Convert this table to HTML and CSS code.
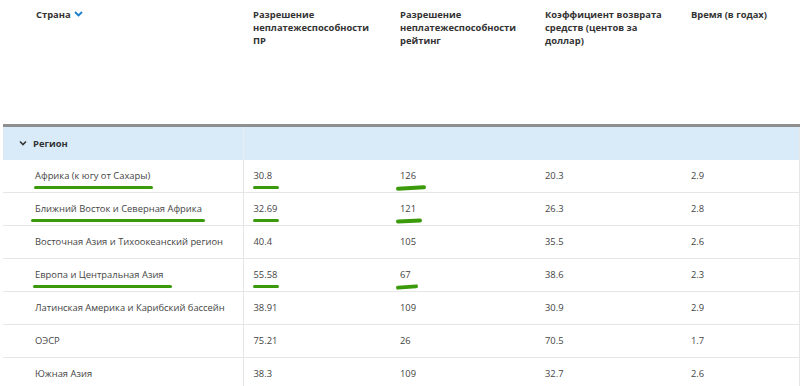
FILE: index.html
```html
<!DOCTYPE html>
<html lang="ru">
<head>
<meta charset="utf-8">
<link rel="stylesheet" href="styles.css">
</head>
<body>
<table class="grid">
  <colgroup>
    <col class="c1"><col class="c2"><col class="c3"><col class="c4"><col class="c5">
  </colgroup>
  <thead>
    <tr>
      <th class="first">Страна <svg class="sort" width="9" height="6" viewBox="0 0 9 6"><path d="M1 1l3.5 3.5L8 1" fill="none" stroke="#1b7fcc" stroke-width="1.8"/></svg></th>
      <th>Разрешение неплатежеспособности ПР</th>
      <th>Разрешение неплатежеспособности рейтинг</th>
      <th>Коэффициент возврата средств (центов за доллар)</th>
      <th>Время (в годах)</th>
    </tr>
  </thead>
  <tbody>
    <tr class="group">
      <td class="gname"><svg class="chev" width="8" height="6" viewBox="0 0 8 6"><path d="M1 1.5l3 3 3-3" fill="none" stroke="#333" stroke-width="1.6"/></svg>Регион</td>
      <td class="rest" colspan="4"></td>
    </tr>
    <tr>
      <td class="first"><span class="mk mk-a">Африка (к югу от Сахары)</span></td>
      <td class="split"><span class="mk mk-n">30.8</span></td>
      <td><span class="mk mk-r">126</span></td>
      <td>20.3</td>
      <td class="last">2.9</td>
    </tr>
    <tr>
      <td class="first"><span class="mk mk-b">Ближний Восток и Северная Африка</span></td>
      <td class="split"><span class="mk mk-n">32.69</span></td>
      <td><span class="mk mk-r mk-r2">121</span></td>
      <td>26.3</td>
      <td class="last">2.8</td>
    </tr>
    <tr>
      <td class="first">Восточная Азия и Тихоокеанский регион</td>
      <td class="split">40.4</td>
      <td>105</td>
      <td>35.5</td>
      <td class="last">2.6</td>
    </tr>
    <tr>
      <td class="first"><span class="mk mk-e">Европа и Центральная Азия</span></td>
      <td class="split"><span class="mk mk-n">55.58</span></td>
      <td><span class="mk mk-r mk-r3">67</span></td>
      <td>38.6</td>
      <td class="last">2.3</td>
    </tr>
    <tr>
      <td class="first">Латинская Америка и Карибский бассейн</td>
      <td class="split">38.91</td>
      <td>109</td>
      <td>30.9</td>
      <td class="last">2.9</td>
    </tr>
    <tr>
      <td class="first">ОЭСР</td>
      <td class="split">75.21</td>
      <td>26</td>
      <td>70.5</td>
      <td class="last">1.7</td>
    </tr>
    <tr>
      <td class="first">Южная Азия</td>
      <td class="split">38.3</td>
      <td>109</td>
      <td>32.7</td>
      <td class="last">2.6</td>
    </tr>
  </tbody>
</table>
</body>
</html>
```

FILE: styles.css
```css
html, body {
  margin: 0;
  padding: 0;
  background: #ffffff;
}

body {
  font-family: "Open Sans", "Noto Sans", sans-serif;
  font-size: 9.4px;
  color: #444;
  padding: 0 1px 0 3px;
  overflow: hidden;
}

.grid {
  border-collapse: collapse;
  table-layout: fixed;
  width: 796px;
}

.c1 { width: 240px; }
.c2 { width: 147px; }
.c3 { width: 145px; }
.c4 { width: 146px; }
.c5 { width: 118px; }

th {
  height: 125px;
  box-sizing: border-box;
  vertical-align: top;
  text-align: left;
  padding: 8px 10px 0 10px;
  font-weight: 700;
  font-size: 9.4px;
  line-height: 13px;
  color: #333;
  border-bottom: 3px solid #8f8f8f;
}

th.first {
  padding-left: 33px;
}

.sort {
  vertical-align: 1px;
  margin-left: 1px;
}

td {
  height: 32px;
  padding: 0 10px;
  vertical-align: middle;
  border-bottom: 1px solid #e6e6e6;
  white-space: nowrap;
}

td.split {
  border-left: 1px solid #e6e6e6;
}

td.last {
  border-right: 1px solid #e6e6e6;
}

td.first {
  padding-left: 32px;
}

.group td {
  background: #d9ebf9;
  height: 33px;
  border-bottom: none;
}

.group td.rest {
  border-left: 1px solid #e9eef2;
  border-right: 1px solid #e6e6e6;
}

.group td.gname {
  padding-left: 16px;
  font-weight: 700;
  color: #333;
}

.chev {
  margin-right: 6px;
  vertical-align: 1px;
}

.mk {
  position: relative;
  display: inline-block;
}

.mk::after {
  content: "";
  position: absolute;
  height: 3.5px;
  border-radius: 2px;
  background: #3a9a0a;
  bottom: -7px;
}

.mk-a::after {
  left: -1px;
  right: -3px;
}

.mk-b::after {
  left: -4px;
  right: -3px;
}

.mk-e::after {
  left: -2px;
  right: -8px;
}

.mk-n::after {
  left: -1px;
  width: 26px;
}

.mk-r::after {
  left: -4px;
  width: 30px;
  transform: rotate(-3deg);
}

.mk-r2::after {
  width: 26px;
  transform: rotate(-2deg);
}

.mk-r3::after {
  width: 22px;
  transform: rotate(-4deg);
}
```
